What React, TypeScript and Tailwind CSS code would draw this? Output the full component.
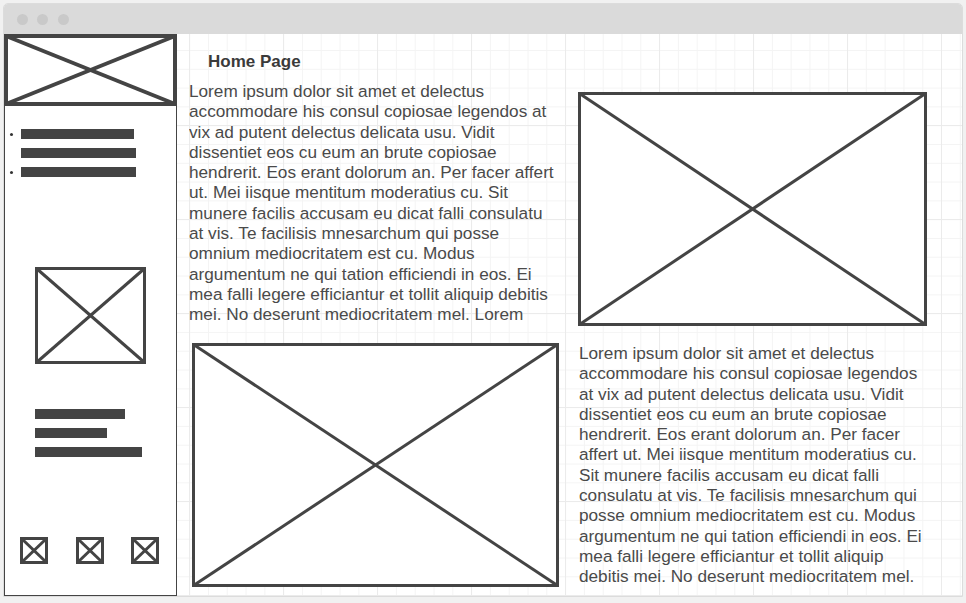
import React from "react";

function XBox({ w, h, sw = 3, className = "" }: { w: number; h: number; sw?: number; className?: string }) {
  const o = sw / 2;
  return (
    <svg width={w} height={h} viewBox={`0 0 ${w} ${h}`} className={"block shrink-0 bg-white " + className}>
      <line x1={o} y1={o} x2={w - o} y2={h - o} stroke="#444" strokeWidth={sw} />
      <line x1={w - o} y1={o} x2={o} y2={h - o} stroke="#444" strokeWidth={sw} />
      <rect x={o} y={o} width={w - sw} height={h - sw} fill="none" stroke="#444" strokeWidth={sw} />
    </svg>
  );
}

const leftLines = [
  "Lorem ipsum dolor sit amet et delectus",
  "accommodare his consul copiosae legendos at",
  "vix ad putent delectus delicata usu. Vidit",
  "dissentiet eos cu eum an brute copiosae",
  "hendrerit. Eos erant dolorum an. Per facer affert",
  "ut. Mei iisque mentitum moderatius cu. Sit",
  "munere facilis accusam eu dicat falli consulatu",
  "at vis. Te facilisis mnesarchum qui posse",
  "omnium mediocritatem est cu. Modus",
  "argumentum ne qui tation efficiendi in eos. Ei",
  "mea falli legere efficiantur et tollit aliquip debitis",
  "mei. No deserunt mediocritatem mel. Lorem",
];

const rightLines = [
  "Lorem ipsum dolor sit amet et delectus",
  "accommodare his consul copiosae legendos",
  "at vix ad putent delectus delicata usu. Vidit",
  "dissentiet eos cu eum an brute copiosae",
  "hendrerit. Eos erant dolorum an. Per facer",
  "affert ut. Mei iisque mentitum moderatius cu.",
  "Sit munere facilis accusam eu dicat falli",
  "consulatu at vis. Te facilisis mnesarchum qui",
  "posse omnium mediocritatem est cu. Modus",
  "argumentum ne qui tation efficiendi in eos. Ei",
  "mea falli legere efficiantur et tollit aliquip",
  "debitis mei. No deserunt mediocritatem mel.",
];

export default function App() {
  return (
    <div className="w-[966px] h-[603px] bg-[#f1f1f1] pl-[3px] pr-[3px] pt-[3px] font-['Liberation_Sans',Arial,sans-serif] overflow-hidden">
      <div className="w-[960px] h-[594px] border border-[#dcdcdc] rounded-t-[5px] flex flex-col overflow-hidden bg-white">
        {/* title bar */}
        <div className="h-[30px] shrink-0 bg-[#dadada] flex items-center pl-[12.5px] gap-[9.5px]">
          <div className="w-[11px] h-[11px] rounded-full bg-[#c9c9c9]" />
          <div className="w-[11px] h-[11px] rounded-full bg-[#c9c9c9]" />
          <div className="w-[11px] h-[11px] rounded-full bg-[#c9c9c9]" />
        </div>
        {/* content */}
        <div className="flex-1 flex bg-white bg-[linear-gradient(to_right,#ebebeb_1px,transparent_1px),linear-gradient(to_bottom,#ebebeb_1px,transparent_1px),linear-gradient(to_right,#f4f4f4_1px,transparent_1px),linear-gradient(to_bottom,#f4f4f4_1px,transparent_1px)] bg-[size:94px_94px,94px_94px,18.8px_18.8px,18.8px_18.8px] bg-[position:91px_91px,91px_91px,16px_16px,16px_16px]">
          {/* sidebar */}
          <div className="w-[173px] shrink-0 flex flex-col">
            <XBox w={173} h={72} sw={4} />
            <div className="flex-1 bg-white border-x border-b border-[#444] flex flex-col">
              <div className="mt-[23px] flex flex-col gap-[9px]">
                <div className="flex items-center h-[10px]">
                  <div className="w-[3px] h-[3px] rounded-full bg-[#333] ml-[5px]" />
                  <div className="ml-[8px] w-[113px] h-[10px] bg-[#444]" />
                </div>
                <div className="flex items-center h-[10px]">
                  <div className="ml-[16px] w-[115px] h-[10px] bg-[#444]" />
                </div>
                <div className="flex items-center h-[10px]">
                  <div className="w-[3px] h-[3px] rounded-full bg-[#333] ml-[5px]" />
                  <div className="ml-[8px] w-[115px] h-[10px] bg-[#444]" />
                </div>
              </div>
              <div className="mt-[90px] ml-[30px]">
                <XBox w={111} h={97} sw={3} />
              </div>
              <div className="mt-[45px] ml-[30px] flex flex-col gap-[9px]">
                <div className="w-[90px] h-[10px] bg-[#444]" />
                <div className="w-[72px] h-[10px] bg-[#444]" />
                <div className="w-[107px] h-[10px] bg-[#444]" />
              </div>
              <div className="mt-[80px] ml-[15px] flex gap-[27.5px]">
                <XBox w={28} h={27} sw={3} />
                <XBox w={28} h={27} sw={3} />
                <XBox w={28} h={27} sw={3} />
              </div>
            </div>
          </div>
          {/* main */}
          <div className="flex-1 flex">
            <div className="w-[389px] shrink-0 flex flex-col">
              <div className="mt-[18px] ml-[31px] h-[20px] leading-[20px] text-[17px] font-bold text-[#3a3a3a]">Home Page</div>
              <div className="mt-[9px] ml-[12px] h-[244px] overflow-hidden text-[17.2px] leading-[20.3px] text-[#4a4a4a]">
                {leftLines.map((l, i) => (
                  <div key={i} className="whitespace-nowrap">{l}</div>
                ))}
              </div>
              <div className="mt-[18px] ml-[15px]">
                <XBox w={367} h={244} sw={3} />
              </div>
            </div>
            <div className="flex-1 flex flex-col">
              <div className="mt-[58px] ml-[12px]">
                <XBox w={349} h={234} sw={3} />
              </div>
              <div className="mt-[17px] ml-[13px] text-[17.2px] leading-[20.3px] text-[#4a4a4a]">
                {rightLines.map((l, i) => (
                  <div key={i} className="whitespace-nowrap">{l}</div>
                ))}
              </div>
            </div>
          </div>
        </div>
      </div>
    </div>
  );
}
